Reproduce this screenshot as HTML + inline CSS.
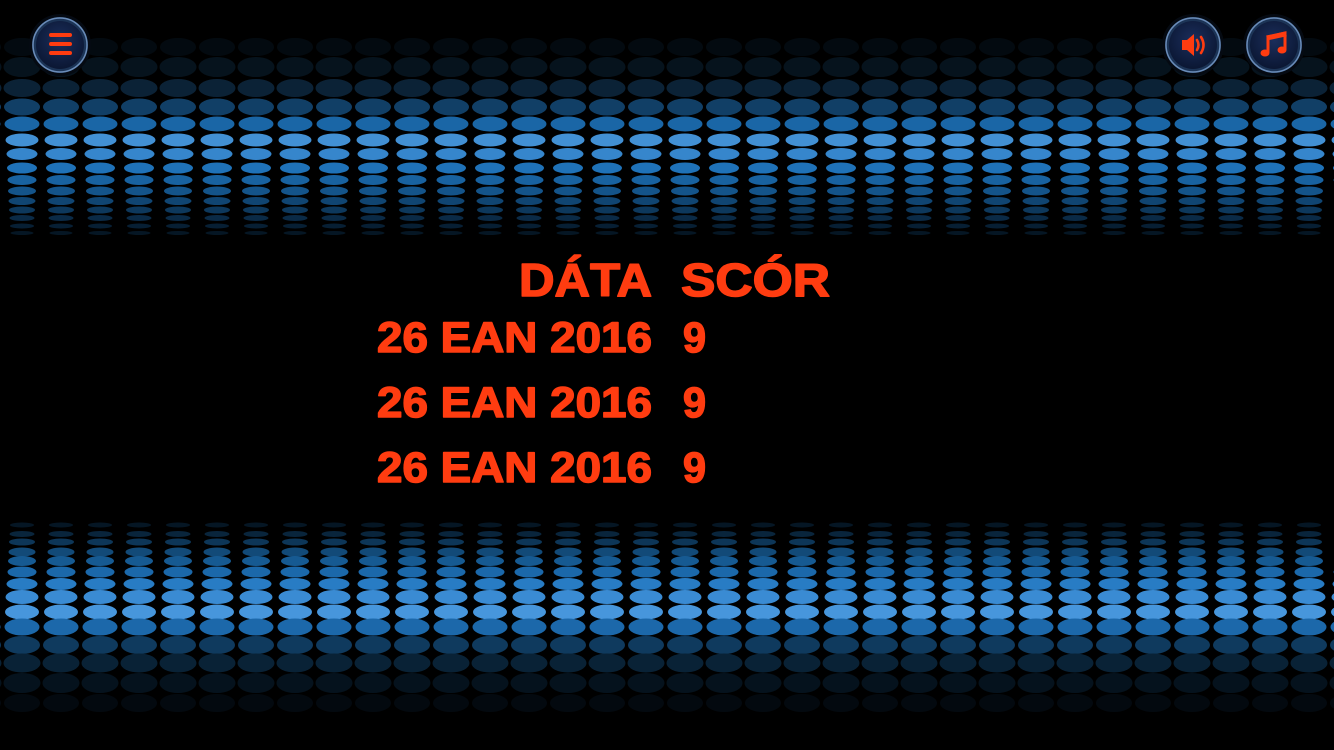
<!DOCTYPE html>
<html><head><meta charset="utf-8"><style>
html,body{margin:0;padding:0;background:#000;width:1334px;height:750px;overflow:hidden}
svg{display:block}
</style></head><body>
<svg width="1334" height="750" viewBox="0 0 1334 750" xmlns="http://www.w3.org/2000/svg">
<defs>
<pattern id="col" x="2.5" y="0" width="39" height="750" patternUnits="userSpaceOnUse">
<ellipse cx="19.5" cy="47" rx="18" ry="9" fill="#030a10"/>
<ellipse cx="19.5" cy="67" rx="18.5" ry="10" fill="#06131d"/>
<ellipse cx="19.5" cy="88" rx="18.5" ry="9" fill="#0b2236"/>
<ellipse cx="19.5" cy="107" rx="18" ry="8.5" fill="#113f66"/>
<ellipse cx="19.5" cy="124" rx="17.5" ry="7.5" fill="#1a66a6"/>
<ellipse cx="19.5" cy="140" rx="16.5" ry="6.5" fill="#4290d4"/>
<ellipse cx="19.5" cy="154" rx="15.5" ry="6" fill="#3686cc"/>
<ellipse cx="19.5" cy="168" rx="15" ry="5.5" fill="#1f72b8"/>
<ellipse cx="19.5" cy="180" rx="14.5" ry="5" fill="#1862a0"/>
<ellipse cx="19.5" cy="191" rx="14" ry="4.5" fill="#14548a"/>
<ellipse cx="19.5" cy="201" rx="13.5" ry="4" fill="#104572"/>
<ellipse cx="19.5" cy="210" rx="13" ry="3.5" fill="#0d385c"/>
<ellipse cx="19.5" cy="218" rx="12.5" ry="3" fill="#0a2a46"/>
<ellipse cx="19.5" cy="226" rx="12" ry="2.5" fill="#071f34"/>
<ellipse cx="19.5" cy="233" rx="11.5" ry="2" fill="#051624"/>

<ellipse cx="19.5" cy="525" rx="12" ry="2.5" fill="#051624"/>
<ellipse cx="19.5" cy="534" rx="12.5" ry="3" fill="#09253c"/>
<ellipse cx="19.5" cy="542" rx="13" ry="3.5" fill="#0d3658"/>
<ellipse cx="19.5" cy="552" rx="13.5" ry="4.5" fill="#124a78"/>
<ellipse cx="19.5" cy="561" rx="14" ry="5" fill="#165a92"/>
<ellipse cx="19.5" cy="572" rx="14.5" ry="5.5" fill="#1b68aa"/>
<ellipse cx="19.5" cy="584" rx="15.5" ry="6" fill="#287cc4"/>
<ellipse cx="19.5" cy="597" rx="16.5" ry="7" fill="#3a8bd3"/>
<ellipse cx="19.5" cy="612" rx="17" ry="7.5" fill="#4796dc"/>
<ellipse cx="19.5" cy="627" rx="17.5" ry="8.5" fill="#1c68aa"/>
<ellipse cx="19.5" cy="645" rx="18" ry="9" fill="#0f3a5e"/>
<ellipse cx="19.5" cy="663" rx="18.5" ry="9.5" fill="#092236"/>
<ellipse cx="19.5" cy="683" rx="18.5" ry="10" fill="#05121d"/>
<ellipse cx="19.5" cy="703" rx="18" ry="9" fill="#03090f"/>
</pattern>
<radialGradient id="btn" cx="0.5" cy="0.4" r="0.6">
<stop offset="0" stop-color="#1b2e5c"/><stop offset="1" stop-color="#0b1733"/>
</radialGradient>
</defs>
<rect width="1334" height="750" fill="#000"/>
<rect width="1334" height="750" fill="url(#col)"/>

<g>
<circle cx="60" cy="45" r="31" fill="#050a12"/>
<circle cx="60" cy="45" r="28" fill="#1c3456"/>
<circle cx="60" cy="45" r="27" fill="none" stroke="#6a8cb8" stroke-width="1.5"/>
<circle cx="60" cy="45" r="24" fill="url(#btn)"/>
<g stroke="#ff3c10" stroke-width="4" stroke-linecap="round">
<line x1="51" y1="35" x2="70" y2="35"/><line x1="51" y1="44" x2="70" y2="44"/><line x1="51" y1="53" x2="70" y2="53"/>
</g>
</g>
<g>
<circle cx="1193" cy="45" r="31" fill="#050a12"/>
<circle cx="1193" cy="45" r="28" fill="#1c3456"/>
<circle cx="1193" cy="45" r="27" fill="none" stroke="#6a8cb8" stroke-width="1.5"/>
<circle cx="1193" cy="45" r="24" fill="url(#btn)"/>
<path d="M1182 40 h5 l7 -6 v22 l-7 -6 h-5 z" fill="#ff3c10"/>
<path d="M1197 40 q3 5 0 10 M1201 37 q5 8 0 16" fill="none" stroke="#ff3c10" stroke-width="2.6" stroke-linecap="round"/>
</g>
<g>
<circle cx="1274" cy="45" r="31" fill="#050a12"/>
<circle cx="1274" cy="45" r="28" fill="#1c3456"/>
<circle cx="1274" cy="45" r="27" fill="none" stroke="#6a8cb8" stroke-width="1.5"/>
<circle cx="1274" cy="45" r="24" fill="url(#btn)"/>
<path d="M1268 37 l17 -4 v17" fill="none" stroke="#ff3c10" stroke-width="3"/>
<path d="M1268 37 v16" fill="none" stroke="#ff3c10" stroke-width="3"/>
<rect x="1266.5" y="33.5" width="20" height="5" fill="#ff3c10" transform="rotate(-12 1276 36)"/>
<ellipse cx="1265" cy="53" rx="4.5" ry="3.5" fill="#ff3c10"/>
<ellipse cx="1282" cy="50" rx="4.5" ry="3.5" fill="#ff3c10"/>
</g>

<g font-family="Liberation Sans, sans-serif" font-weight="bold" fill="#ff3c10" stroke="#ff3c10" stroke-width="1.5" stroke-linejoin="round">
<text x="519" y="296" font-size="46" textLength="133" lengthAdjust="spacingAndGlyphs">DÁTA</text>
<text x="681" y="296" font-size="46" textLength="149" lengthAdjust="spacingAndGlyphs">SCÓR</text>
<text x="377" y="352" font-size="43" textLength="275" lengthAdjust="spacingAndGlyphs">26 EAN 2016</text>
<text x="683" y="352" font-size="43" textLength="23" lengthAdjust="spacingAndGlyphs">9</text>
<text x="377" y="417" font-size="43" textLength="275" lengthAdjust="spacingAndGlyphs">26 EAN 2016</text>
<text x="683" y="417" font-size="43" textLength="23" lengthAdjust="spacingAndGlyphs">9</text>
<text x="377" y="482" font-size="43" textLength="275" lengthAdjust="spacingAndGlyphs">26 EAN 2016</text>
<text x="683" y="482" font-size="43" textLength="23" lengthAdjust="spacingAndGlyphs">9</text>
</g>
</svg>
</body></html>
